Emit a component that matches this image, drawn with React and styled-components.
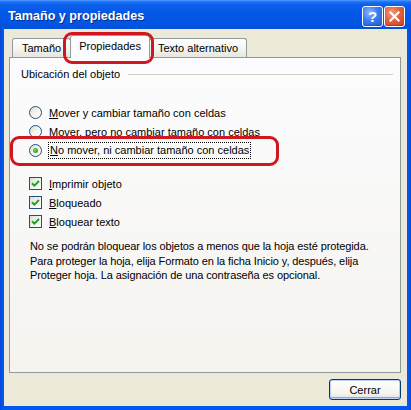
import React from 'react';
import styled, { createGlobalStyle } from 'styled-components';

const Global = createGlobalStyle`
  html, body { margin: 0; padding: 0; background: #ffffff; }
  body { font-family: "Liberation Sans", Tahoma, Arial, sans-serif; font-size: 11px; color: #000; }
  * { box-sizing: border-box; }
`;

const Window = styled.div`
  position: relative;
  width: 411px;
  height: 410px;
  display: flex;
  flex-direction: column;
  background: linear-gradient(to right, #0A3FD0 0, #0058EE 2px, #0058EE calc(100% - 2px), #0A3FD0 100%);
  overflow: hidden;
`;

const TitleBar = styled.div`
  height: 29px;
  flex: none;
  display: flex;
  align-items: center;
  justify-content: space-between;
  padding: 3px 6px 0 8px;
  background: linear-gradient(#4D9BFF 0, #1C6EF5 2px, #0A5FEA 5px, #0458E6 45%, #0255E2 80%, #0050D8 100%);
`;

const Title = styled.span`
  color: #fff;
  font-family: "Liberation Sans", Tahoma, Arial, sans-serif;
  font-weight: bold;
  font-size: 12.6px;
  text-shadow: 1px 1px 0 #0A2C8F;
`;

const TitleButtons = styled.div`
  display: flex;
  gap: 1px;
`;

const TitleButton = styled.div`
  width: 21px;
  height: 21px;
  border: 1px solid #fff;
  border-radius: 3px;
  display: flex;
  align-items: center;
  justify-content: center;
  color: #fff;
  font-weight: bold;
  font-size: 15px;
  font-family: "Liberation Sans", Arial, sans-serif;
  background: ${p => p.$close
    ? 'radial-gradient(circle at 35% 30%, #F09A7E 0, #E2613F 45%, #C8401F 100%)'
    : 'radial-gradient(circle at 35% 30%, #8DB6FF 0, #3C7DF0 45%, #1F5BD8 100%)'};
  box-shadow: inset 0 -1px 1px rgba(0,0,0,0.25);
`;

const Body = styled.div`
  flex: 1;
  margin: 0 4px 4px 4px;
  background: #ECE9D8;
  display: flex;
  flex-direction: column;
  padding: 6px 6px 6px 5px;
`;

const TabStrip = styled.div`
  height: 22px;
  flex: none;
  display: flex;
  align-items: flex-end;
  padding-left: 3px;
  position: relative;
  z-index: 1;
`;

const Tab = styled.div`
  position: relative;
  display: flex;
  align-items: center;
  justify-content: center;
  border: 1px solid #919B9C;
  border-bottom: none;
  border-radius: 3px 3px 0 0;
  font-size: 11px;
  white-space: nowrap;
  ${p => p.$active ? `
    height: 23px;
    margin: 0 -1px -1px -1px;
    padding: 0 8px 2px;
    background: #FCFCFE;
    z-index: 2;
  ` : `
    height: 19px;
    padding: 0 ${p.$pad || 8}px;
    background: linear-gradient(#FFFFFF, #F3F3EF 60%, #E6E5DE);
    z-index: 1;
  `}
`;

const Panel = styled.div`
  flex: 1;
  border: 1px solid #919B9C;
  background: linear-gradient(#FCFCFE, #F4F3EE);
  display: flex;
  flex-direction: column;
  padding: 10px 7px 0 11px;
`;

const GroupHeader = styled.div`
  display: flex;
  align-items: center;
  gap: 8px;
  height: 13px;
  line-height: 13px;
  &::after {
    content: "";
    flex: 1;
    height: 1px;
    background: #D0D0BF;
  }
`;

const OptionList = styled.div`
  display: flex;
  flex-direction: column;
  padding-left: 8px;
  margin-top: ${p => p.$top}px;
`;

const Row = styled.label`
  height: 19px;
  display: flex;
  align-items: center;
  gap: 7px;
  white-space: nowrap;
`;

const RadioCircle = styled.span`
  width: 13px;
  height: 13px;
  border-radius: 50%;
  border: 1px solid #1C5180;
  background: linear-gradient(135deg, #DCDBD1 0%, #F3F2EC 50%, #FFFFFF 100%);
  display: flex;
  align-items: center;
  justify-content: center;
  flex: none;
`;

const RadioDot = styled.span`
  width: 5px;
  height: 5px;
  border-radius: 50%;
  background: radial-gradient(circle at 40% 40%, #6EDB6A 0, #2FAA2C 60%, #21A121 100%);
`;

const CheckBox = styled.span`
  width: 13px;
  height: 13px;
  border: 1px solid #1C5180;
  background: linear-gradient(135deg, #DCDCD7 0%, #F4F4F1 55%, #FFFFFF 100%);
  display: flex;
  align-items: center;
  justify-content: center;
  flex: none;
`;

const Focus = styled.span`
  outline: 1px dotted #000;
  outline-offset: 0;
  padding: 1px 1px 2px;
`;

const Key = styled.u`
  text-decoration: underline;
  text-underline-offset: 1px;
`;

const Note = styled.p`
  margin: 8px 0 0 9px;
  line-height: 14.5px;
  font-size: 11px;
  letter-spacing: -0.1px;
`;

const ButtonRow = styled.div`
  flex: none;
  display: flex;
  justify-content: flex-end;
  margin-top: 6px;
`;

const Button = styled.button`
  width: 72px;
  height: 21px;
  font-family: "Liberation Sans", Tahoma, Arial, sans-serif;
  font-size: 11px;
  color: #000;
  border: 1px solid #003C74;
  border-radius: 3px;
  padding: 0;
  background: linear-gradient(#FFFFFF, #F5F4F0 70%, #E3E0D6);
  box-shadow: inset 0 0 0 1px #BCD0F7, inset 0 -1px 0 1px #8FA8EC;
`;

const Annotation = styled.div`
  position: absolute;
  border: 3px solid #D0161F;
  border-radius: 9px;
  pointer-events: none;
  z-index: 5;
`;

const Check = () => (
  <svg width="9" height="9" viewBox="0 0 9 9">
    <path d="M1 4.2 L3.4 6.6 L8 2" fill="none" stroke="#21A121" strokeWidth="2" />
  </svg>
);

const CloseX = () => (
  <svg width="11" height="11" viewBox="0 0 11 11">
    <path d="M1.5 1.5 L9.5 9.5 M9.5 1.5 L1.5 9.5" stroke="#fff" strokeWidth="2.2" strokeLinecap="square" />
  </svg>
);

export default function App() {
  return (
    <>
      <Global />
      <Window>
        <TitleBar>
          <Title>Tamaño y propiedades</Title>
          <TitleButtons>
            <TitleButton>?</TitleButton>
            <TitleButton $close><CloseX /></TitleButton>
          </TitleButtons>
        </TitleBar>
        <Body>
          <TabStrip>
            <Tab $pad={9}>Tamaño</Tab>
            <Tab $active>Propiedades</Tab>
            <Tab $pad={8}>Texto alternativo</Tab>
          </TabStrip>
          <Panel>
            <GroupHeader>Ubicación del objeto</GroupHeader>
            <OptionList $top={22}>
              <Row><RadioCircle /><span><Key>M</Key>over y cambiar tamaño con celdas</span></Row>
              <Row><RadioCircle /><span>M<Key>o</Key>ver, pero no cambiar tamaño con celdas</span></Row>
              <Row><RadioCircle><RadioDot /></RadioCircle><Focus><Key>N</Key>o mover, ni cambiar tamaño con celdas</Focus></Row>
            </OptionList>
            <OptionList $top={14}>
              <Row><CheckBox><Check /></CheckBox><span><Key>I</Key>mprimir objeto</span></Row>
              <Row><CheckBox><Check /></CheckBox><span><Key>B</Key>loqueado</span></Row>
              <Row><CheckBox><Check /></CheckBox><span><Key>B</Key>loquear texto</span></Row>
            </OptionList>
            <Note>
              No se podrán bloquear los objetos a menos que la hoja esté protegida.<br />
              Para proteger la hoja, elija Formato en la ficha Inicio y, después, elija<br />
              Proteger hoja. La asignación de una contraseña es opcional.
            </Note>
          </Panel>
          <ButtonRow>
            <Button>Cerrar</Button>
          </ButtonRow>
        </Body>
        <Annotation style={{ left: 63, top: 32, width: 91, height: 32 }} />
        <Annotation style={{ left: 10, top: 136, width: 269, height: 30 }} />
      </Window>
    </>
  );
}
